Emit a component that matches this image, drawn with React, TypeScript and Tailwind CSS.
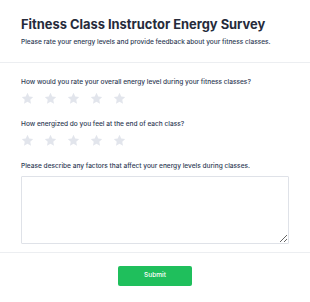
import { useState } from 'react';

const QUESTIONS = [
  'How would you rate your overall energy level during your fitness classes?',
  'How energized do you feel at the end of each class?',
];

function Star({ active, onClick }: { active: boolean; onClick: () => void }) {
  return (
    <button type="button" onClick={onClick} className="w-[13px] h-[13px] p-0">
      <svg viewBox="0 0 24 24" className={active ? 'w-full h-full fill-[#facc15]' : 'w-full h-full fill-[#e2e5ec]'}>
        <path d="M12 1.5l3.2 6.7 7.3.9-5.4 5.1 1.4 7.3L12 17.9l-6.5 3.6 1.4-7.3-5.4-5.1 7.3-.9z" />
      </svg>
    </button>
  );
}

export default function App() {
  const [ratings, setRatings] = useState<number[]>([0, 0]);
  const [notes, setNotes] = useState('');

  return (
    <div className="min-h-screen bg-white font-['Inter',sans-serif] text-[#1f2937]">
      {/* Header */}
      <div className="px-[21px] pt-[16px] pb-[15px] border-b border-[#eceef1]">
        <h1 className="text-[12.9px] leading-[18px] font-bold text-[#262b3b]">
          Fitness Class Instructor Energy Survey
        </h1>
        <p className="mt-[3px] text-[6.55px] leading-[10px] font-medium text-[#2f3b55]">
          Please rate your energy levels and provide feedback about your fitness classes.
        </p>
      </div>

      {/* Questions */}
      <div className="px-[21px] pt-[14px] pb-[8px] border-b border-[#eceef1] flex flex-col">
        {QUESTIONS.map((q, i) => (
          <div key={q} className={i === 0 ? 'mb-[14px]' : 'mb-[14px]'}>
            <p className="text-[6.55px] leading-[10px] font-medium text-[#2f3b55]">{q}</p>
            <div className="flex gap-[10px] mt-[5px]">
              {[1, 2, 3, 4, 5].map((n) => (
                <Star
                  key={n}
                  active={n <= ratings[i]}
                  onClick={() => setRatings((r) => r.map((v, j) => (j === i ? n : v)))}
                />
              ))}
            </div>
          </div>
        ))}
        <p className="text-[6.55px] leading-[10px] font-medium text-[#2f3b55]">
          Please describe any factors that affect your energy levels during classes.
        </p>
        <textarea
          value={notes}
          onChange={(e) => setNotes(e.target.value)}
          className="mt-[5px] w-full h-[68px] border border-[#dfe2e8] rounded-[1px] text-[7px] p-[4px] outline-none"
        />
      </div>

      {/* Footer */}
      <div className="flex justify-center pt-[13px]">
        <button className="w-[74px] h-[20px] bg-[#1fbf5c] rounded-[2px] text-white text-[6.55px] font-medium">
          Submit
        </button>
      </div>
    </div>
  );
}
